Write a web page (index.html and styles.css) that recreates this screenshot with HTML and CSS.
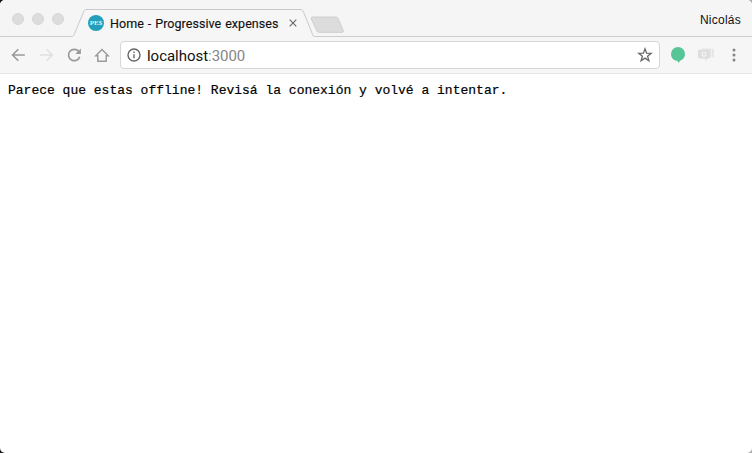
FILE: index.html
```html
<!DOCTYPE html>
<html lang="es">
<head>
<meta charset="utf-8">
<title>Home - Progressive expenses</title>
<link rel="stylesheet" href="styles.css">
</head>
<body>
<div class="window">
  <header class="tabstrip">
    <div class="lights"><i></i><i></i><i></i></div>
    <div class="tab">
      <svg class="tab-shape" width="245" height="29" viewBox="0 0 245 29">
        <path d="M0 27.500C1.200 27.300 1.600 26.800 2.200 25.500L11.500 3C12.300 1 13 .5 15 .5H228C230 .5 230.700 1 231.500 3L240.600 25.500C241.200 27 241.800 27.500 243 27.500V29H0Z" fill="#f6f6f6"/>
        <path d="M0 27.500C1.200 27.300 1.600 26.800 2.200 25.500L11.500 3C12.300 1 13 .5 15 .5H228C230 .5 230.700 1 231.500 3L240.600 25.500C241.200 27 241.800 27.500 243 27.500" fill="none" stroke="#c9c9c9"/>
      </svg>
      <span class="favicon">PE$</span>
      <span class="tab-title">Home - Progressive expenses</span>
      <svg class="close" width="10" height="10" viewBox="0 0 10 10"><path d="M1.700 1.700L8.300 8.300M8.300 1.700L1.700 8.300" stroke="#6a6a6a" stroke-width="1.200"/></svg>
    </div>
    <svg class="newtab" width="36" height="18" viewBox="0 0 36 18"><path d="M3.500 1H25.500C27 1 27.700 1.500 28.300 3L33 14C33.700 15.800 33.500 16.300 32 16.300H9.500C7.900 16.300 7.100 15.700 6.500 14.200L1.400 3C.8 1.500 1.300 1 3.500 1Z" fill="#dcdcdc" stroke="#cecece"/></svg>
    <span class="profile">Nicolás</span>
  </header>
  <nav class="toolbar">
    <svg class="icon" width="28" height="20" viewBox="0 0 28 20"><path d="M24.800 10H13M18.300 4.200L12.500 10L18.300 15.800" fill="none" stroke="#9a9a9a" stroke-width="1.600"/></svg>
    <svg class="icon" width="28" height="20" viewBox="0 0 28 20"><path d="M12 10H23.800M18.500 4.200L24.300 10L18.500 15.800" fill="none" stroke="#e0e0e0" stroke-width="1.600"/></svg>
    <svg class="icon" width="28" height="20" viewBox="0 0 28 20"><path d="M22.700 6.400A5.700 5.700 0 1 0 23.700 11.700" fill="none" stroke="#9a9a9a" stroke-width="1.700"/><path d="M24.900 3.500V9H19.400Z" fill="#9a9a9a"/></svg>
    <svg class="icon" width="28" height="20" viewBox="0 0 28 20"><path d="M11.800 10.800L18 4.600L24.200 10.800H22.200V16.200H13.800V10.800Z" fill="none" stroke="#9a9a9a" stroke-width="1.400"/></svg>
    <div class="omnibox">
      <svg width="14" height="14" viewBox="0 0 14 14"><circle cx="7" cy="7" r="6" fill="none" stroke="#666" stroke-width="1.400"/><path d="M7 6.300V10.300M7 3.600V5" stroke="#666" stroke-width="1.400"/></svg>
      <span class="url">localhost<span class="port">:3000</span></span>
      <svg class="star" width="16" height="16" viewBox="0 0 16 16"><path d="M8 1.800L9.600 6.200L14.200 6.300L10.600 9.200L11.900 13.700L8 11.100L4.100 13.700L5.400 9.200L1.800 6.300L6.400 6.200Z" fill="none" stroke="#686868" stroke-width="1.300"/></svg>
    </div>
    <svg class="bubble" width="16" height="18" viewBox="0 0 16 18"><path d="M8 1A7 7 0 0 0 1 8C1 12 4 14.800 7.500 14.900L8.700 16.900L10 14.700C13 13.800 15 11.200 15 8A7 7 0 0 0 8 1Z" fill="#58c598"/></svg>
    <svg class="chat" width="18" height="16" viewBox="0 0 18 16"><path d="M5 1.500H14.500V10.500H5Z" fill="#e8e8e8"/><path d="M2.500 2.500H11.500Q13 2.500 13 4V10Q13 11.500 11.500 11.500H10.500L8 14V11.500H2.500Q1 11.500 1 10V4Q1 2.500 2.500 2.500Z" fill="#dedede"/><path d="M15 2L16.700 1.200V11L15 10Z" fill="#e4e4e4"/><circle cx="7" cy="7.300" r="1.900" fill="#d9d9d9" stroke="#f6f6f6" stroke-width="1.200"/></svg>
    <svg class="menu" width="6" height="16" viewBox="0 0 6 16"><g fill="#858585"><circle cx="3" cy="3" r="1.500"/><circle cx="3" cy="8" r="1.500"/><circle cx="3" cy="13" r="1.500"/></g></svg>
  </nav>
  <main class="page">Parece que estas offline! Revisá la conexión y volvé a intentar.</main>
</div>
</body>
</html>
```
FILE: styles.css
```css
* { box-sizing: border-box; }
body {
  margin: 0;
  background: linear-gradient(90deg, #111 50%, #aaa 50%);
  overflow: hidden;
}
.window {
  width: 752px;
  height: 453px;
  border-radius: 5px;
  background: #fff;
  overflow: hidden;
}
.tabstrip {
  display: flex;
  height: 37px;
  background: linear-gradient(#cdcdcd, #cdcdcd) 0 36px / 100% 1px no-repeat #f5f5f5;
}
.lights {
  display: flex;
  gap: 8px;
  width: 72px;
  padding: 13px 0 0 12px;
}
.lights i {
  width: 12px;
  height: 12px;
  border-radius: 50%;
  background: #dcdcdc;
  border: 1px solid #d7d7d7;
}
.tab {
  position: relative;
  display: flex;
  align-items: center;
  width: 238px;
  height: 28px;
  margin-top: 9px;
  padding-left: 16px;
}
.tab-shape {
  position: absolute;
  left: 0;
  top: 0;
}
.favicon {
  position: relative;
  width: 16px;
  height: 16px;
  border-radius: 50%;
  background: #249fbb;
  color: #d9f3f7;
  font: bold 7px/16px "Liberation Serif", serif;
  text-align: center;
}
.tab-title {
  position: relative;
  width: 179px;
  padding: 1px 0 0 6px;
  font: 12.500px/18px Roboto, sans-serif;
  letter-spacing: 0.050px;
  word-spacing: 0.800px;
  white-space: nowrap;
  color: #111;
  -webkit-text-stroke: 0.150px #111;
}
.close {
  position: relative;
  margin-left: 5px;
}
.newtab { margin-top: 16px; }
.profile {
  margin: 12px 11px 0 auto;
  font: 12px/16px "Liberation Sans", sans-serif;
  letter-spacing: 0.250px;
  color: #111;
}
.toolbar {
  display: flex;
  align-items: center;
  height: 37px;
  background: #f6f6f6;
  border-bottom: 1px solid #e6e6e6;
}
.omnibox {
  display: flex;
  align-items: center;
  width: 540px;
  height: 28px;
  margin-left: 8px;
  padding: 0 6px;
  border: 1px solid #d6d6d6;
  border-radius: 4px;
  background: #fff;
}
.url {
  margin-left: 6px;
  padding-top: 2px;
  font: 15px/20px Roboto, sans-serif;
  letter-spacing: -0.030px;
  color: #111;
}
.port { color: #858585; }
.star { margin-left: auto; }
.bubble { margin-left: 10px; }
.chat { margin-left: 11px; }
.menu { margin-left: 16px; }
.page {
  padding: 9px 8px;
  font: 13px/16px "Liberation Mono", monospace;
  color: #000;
  white-space: nowrap;
  -webkit-text-stroke: 0.200px #000;
}
```
